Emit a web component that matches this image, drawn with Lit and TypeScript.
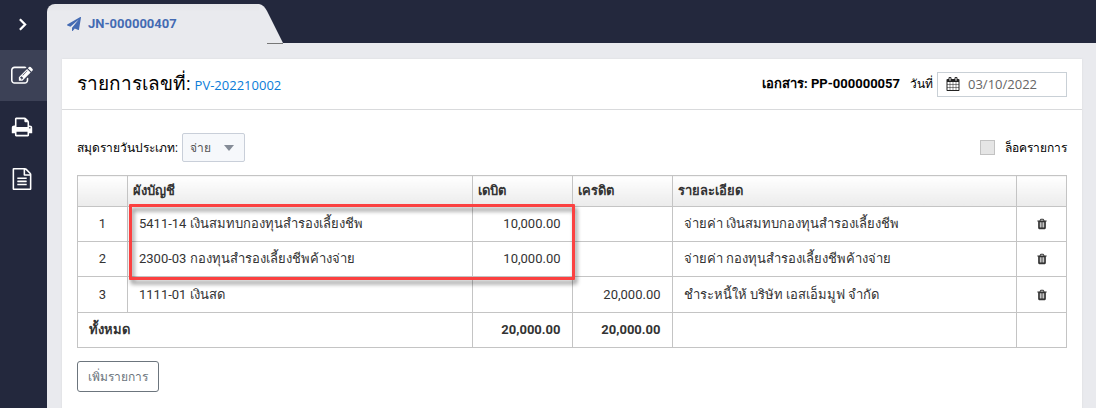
import { LitElement, html, css, svg } from "lit";
import { customElement, property, state } from "lit/decorators.js";

const ICONS: Record<string, string> = {
  edit: "M888 1184l116-116-152-152-116 116v56h96v96h56zm440-720q-16-16-33 1l-350 350q-17 17-1 33t33-1l350-350q17-17 1-33zm80 594v190q0 119-84.5 203.5t-203.5 84.5h-832q-119 0-203.5-84.5t-84.5-203.5v-832q0-119 84.5-203.5t203.5-84.5h832q63 0 117 25 15 7 18 23 3 17-9 29l-49 49q-14 14-32 8-23-6-45-6h-832q-66 0-113 47t-47 113v832q0 66 47 113t113 47h832q66 0 113-47t47-113v-126q0-13 9-22l64-64q15-15 35-7t20 29zm-96-738l288 288-672 672h-288v-288zm444 132l-92 92-288-288 92-92q28-28 68-28t68 28l152 152q28 28 28 68t-28 68z",
  print: "M448 1536h896v-256h-896v256zm0-640h896v-384h-160q-40 0-68-28t-28-68v-160h-640v640zm1152 64q0-26-19-45t-45-19-45 19-19 45 19 45 45 19 45-19 19-45zm128 0v416q0 13-9.5 22.5t-22.5 9.5h-224v160q0 40-28 68t-68 28h-960q-40 0-68-28t-28-68v-160h-224q-13 0-22.5-9.5t-9.5-22.5v-416q0-79 56.5-135.5t135.5-56.5h64v-544q0-40 28-68t68-28h672q40 0 88 20t76 48l152 152q28 28 48 76t20 88v256h64q79 0 135.5 56.5t56.5 135.5z",
  file: "M1596 380q28 28 48 76t20 88v1152q0 40-28 68t-68 28h-1344q-40 0-68-28t-28-68v-1600q0-40 28-68t68-28h896q40 0 88 20t76 48zm-444-244v376h376q-10-29-22-41l-313-313q-12-12-41-22zm384 1528v-1024h-416q-40 0-68-28t-28-68v-416h-768v1536h1280zm-1024-864q0-14 9-23t23-9h704q14 0 23 9t9 23v64q0 14-9 23t-23 9h-704q-14 0-23-9t-9-23v-64zm736 224q14 0 23 9t9 23v64q0 14-9 23t-23 9h-704q-14 0-23-9t-9-23v-64q0-14 9-23t23-9h704zm0 256q14 0 23 9t9 23v64q0 14-9 23t-23 9h-704q-14 0-23-9t-9-23v-64q0-14 9-23t23-9h704z",
  trash: "M704 1376v-704q0-14-9-23t-23-9h-64q-14 0-23 9t-9 23v704q0 14 9 23t23 9h64q14 0 23-9t9-23zm256 0v-704q0-14-9-23t-23-9h-64q-14 0-23 9t-9 23v704q0 14 9 23t23 9h64q14 0 23-9t9-23zm256 0v-704q0-14-9-23t-23-9h-64q-14 0-23 9t-9 23v704q0 14 9 23t23 9h64q14 0 23-9t9-23zm-544-992h448l-48-117q-7-9-17-11h-317q-10 2-17 11zm928 32v64q0 14-9 23t-23 9h-96v948q0 83-47 143.5t-113 60.5h-832q-66 0-113-58.5t-47-141.5v-952h-96q-14 0-23-9t-9-23v-64q0-14 9-23t23-9h309l70-167q15-37 54-63t79-26h320q40 0 79 26t54 63l70 167h309q14 0 23 9t9 23z",
  plane: "M1764 11q33 24 27 64l-256 1536q-5 29-32 45-14 8-31 8-11 0-24-5l-453-185-242 295q-18 23-49 23-13 0-22-4-19-7-30.5-23.5t-11.5-36.5v-349l864-1059-1069 925-395-162q-37-14-40-55-2-40 32-59l1664-960q15-9 32-9 20 0 36 11z",
  calendar: "M192 1664h288v-288h-288v288zm352 0h320v-288h-320v288zm-352-352h288v-320h-288v320zm352 0h320v-320h-320v320zm-352-384h288v-288h-288v288zm736 736h320v-288h-320v288zm-384-736h320v-288h-320v288zm768 736h288v-288h-288v288zm-384-352h320v-320h-320v320zm-352-864v-288q0-13-9.5-22.5t-22.5-9.5h-64q-13 0-22.5 9.5t-9.5 22.5v288q0 13 9.5 22.5t22.5 9.5h64q13 0 22.5-9.5t9.5-22.5zm736 864h288v-320h-288v320zm-384-384h320v-288h-320v288zm384 0h288v-288h-288v288zm32-480v-288q0-13-9.5-22.5t-22.5-9.5h-64q-13 0-22.5 9.5t-9.5 22.5v288q0 13 9.5 22.5t22.5 9.5h64q13 0 22.5-9.5t9.5-22.5zm384-64v1280q0 52-38 90t-90 38h-1408q-52 0-90-38t-38-90v-1280q0-52 38-90t90-38h128v-96q0-66 47-113t113-47h64q66 0 113 47t47 113v96h384v-96q0-66 47-113t113-47h64q66 0 113 47t47 113v96h128q52 0 90 38t38 90z",
};

@customElement("glyph-icon")
class GlyphIcon extends LitElement {
  @property() name = "edit";
  static styles = css`
    :host { display: inline-flex; width: 14px; height: 14px; }
    .glyph { width: 100%; height: 100%; fill: currentColor; overflow: visible; }
    .line { fill: none; stroke: currentColor; stroke-width: 240; }
  `;
  render() {
    return html`<svg class="glyph" viewBox="0 0 1792 1792" aria-hidden="true">
      ${this.name === "chevron"
        ? svg`<path class="line" d="M620 340L1170 896L620 1452" />`
        : svg`<path d=${ICONS[this.name]} />`}
    </svg>`;
  }
}

interface Entry {
  account: string;
  debit: string;
  credit: string;
  detail: string;
}

@customElement("app-root")
class AppRoot extends LitElement {
  @state() private entries: Entry[] = [
    { account: "5411-14 เงินสมทบกองทุนสำรองเลี้ยงชีพ", debit: "10,000.00", credit: "", detail: "จ่ายค่า เงินสมทบกองทุนสำรองเลี้ยงชีพ" },
    { account: "2300-03 กองทุนสำรองเลี้ยงชีพค้างจ่าย", debit: "10,000.00", credit: "", detail: "จ่ายค่า กองทุนสำรองเลี้ยงชีพค้างจ่าย" },
    { account: "1111-01 เงินสด", debit: "", credit: "20,000.00", detail: "ชำระหนี้ให้ บริษัท เอสเอ็มมูฟ จำกัด" },
  ];

  static styles = css`
    :host {
      display: grid;
      grid-template-columns: 47px 1fr;
      min-height: 100vh;
      background: #e9eaee;
      color: #000;
      font: 13px/20px Roboto, "Open Sans", sans-serif;
    }
    * { box-sizing: border-box; }
    button, input, select { font: inherit; color: inherit; margin: 0; }
    .side { background: #23283d; display: flex; flex-direction: column; }
    .side-btn {
      height: 52px; padding: 0 3px 0 0; border: 0; background: none; color: #fff;
      display: flex; align-items: center; justify-content: center;
    }
    .side-btn.first { height: 50px; padding-bottom: 2px; }
    .side-btn.active { background: #3c4156; height: 51px; }
    .side-btn glyph-icon { width: 22px; height: 22px; }
    .side-btn.first glyph-icon { width: 17px; height: 17px; }
    .side-btn.sheet { padding-bottom: 1px; }
    .topbar { height: 43px; background: #23283d; display: flex; align-items: flex-end; }
    .tab {
      height: 39px; width: 212px; padding: 0 20px; border-radius: 8px 0 0 0;
      background: linear-gradient(#e4e5e8, #e9eaee 8px); color: #446bb3;
      display: flex; align-items: center; gap: 7px; font-weight: 700; text-decoration: none;
    }
    .slant { width: 24px; height: 40px; margin-bottom: -1px; }
    .content { padding: 16px 14px 0 15px; display: flex; flex-direction: column; min-height: calc(100vh - 43px); }
    .card { background: #fff; flex: 1; box-shadow: 0 0 2px #d8d9de; }
    .head {
      height: 51px; padding: 0 15px; border-bottom: 1px solid #d9dadc;
      display: flex; align-items: center; justify-content: space-between;
    }
    .title { margin: 0; font-size: 19px; font-weight: 400; display: flex; align-items: baseline; gap: 4px; }
    .title a { font: 13px/20px "Open Sans", Roboto, sans-serif; color: #0a7cd8; text-decoration: none; }
    .doc { display: flex; align-items: center; }
    .doc b { margin-right: 10px; }
    label, .pick select, .add { font-size: 12px; }
    .doc label { margin-right: 4px; }
    .date { display: flex; align-items: center; width: 130px; height: 25px; padding-left: 8px; gap: 8px; border: 1px solid #c9d0d6; color: #222; }
    .date input { border: 0; padding: 0; width: 90px; background: none; outline: 0; color: #666; font-family: "Open Sans", Roboto, sans-serif; }
    .body { padding: 23px 15px; }
    .filter { display: flex; align-items: center; justify-content: space-between; height: 29px; }
    .group { display: flex; align-items: center; gap: 4px; }
    .pick { display: grid; align-items: center; }
    .pick > * { grid-area: 1 / 1; }
    .pick select { appearance: none; width: 63px; height: 29px; padding: 0 7px; border: 1px solid #c9cfd9; border-radius: 2px; background: #f6f8fb; color: #555; }
    .caret { justify-self: end; margin-right: 11px; width: 10px; height: 6px; fill: #858c97; pointer-events: none; }
    .lock { display: flex; align-items: center; gap: 10px; }
    .lock input { appearance: none; width: 15px; height: 15px; border: 1px solid #c2c2c2; background: #e5e5e5; }
    .sheet-wrap { position: relative; margin: 13px 0; }
    table { width: 100%; table-layout: fixed; border-collapse: collapse; color: #333; }
    th, td { border: 1px solid #c4c4c4; padding: 0 12px 0 11px; height: 35px; text-align: left; white-space: nowrap; }
    tbody tr:last-child td { height: 36px; }
    thead th { height: 31px; padding: 0 5px; background: linear-gradient(#fff, #ebebeb); }
    .narrow { width: 50px; }
    .money { width: 100px; }
    .mid { text-align: center; padding: 0; }
    .num { text-align: right; padding: 0 11px; }
    .del { border: 0; background: none; padding: 0; display: block; margin: 0 auto; height: 12px; line-height: 12px; }
    .del glyph-icon { width: 12px; height: 12px; }
    .mark {
      position: absolute; left: 52px; right: calc(50% - 3px); top: 29px; height: 76px;
      border: 3px solid #fb4141; border-radius: 1px; pointer-events: none;
      filter: drop-shadow(2px 4px 2px rgba(0, 0, 0, 0.45));
    }
    .add { height: 31px; padding: 0 10px; border: 1px solid #6c757d; border-radius: 3px; background: #fff; color: #6c757d; }
  `;

  render() {
    return html`
      <nav class="side">
        <button class="side-btn first" aria-label="ขยายเมนู"><glyph-icon name="chevron"></glyph-icon></button>
        <button class="side-btn active" aria-label="แก้ไข"><glyph-icon name="edit"></glyph-icon></button>
        <button class="side-btn" aria-label="พิมพ์"><glyph-icon name="print"></glyph-icon></button>
        <button class="side-btn sheet" aria-label="เอกสาร"><glyph-icon name="file"></glyph-icon></button>
      </nav>
      <div>
        <header class="topbar">
          <a class="tab" href="#"><glyph-icon name="plane"></glyph-icon>JN-000000407</a>
          <svg class="slant" viewBox="0 0 24 40" aria-hidden="true">
            <path fill="#e9eaee" d="M0 0Q5 1 8 7L24 39V40H0Z" />
            <path fill="#777" d="M8 39H24V40H8Z" />
          </svg>
        </header>
        <main class="content">
          <section class="card">
            <div class="head">
              <h1 class="title">รายการเลขที่: <a href="#">PV-202210002</a></h1>
              <div class="doc">
                <b>เอกสาร: PP-000000057</b>
                <label for="date">วันที่</label>
                <span class="date"><glyph-icon name="calendar"></glyph-icon><input id="date" type="text" value="03/10/2022" /></span>
              </div>
            </div>
            <div class="body">
              <div class="filter">
                <div class="group">
                  <label for="book">สมุดรายวันประเภท:</label>
                  <span class="pick">
                    <select id="book"><option>จ่าย</option></select>
                    <svg class="caret" viewBox="0 0 10 6" aria-hidden="true"><path d="M0 0H10L5 6Z" /></svg>
                  </span>
                </div>
                <label class="lock"><input type="checkbox" />ล็อครายการ</label>
              </div>
              <div class="sheet-wrap">
                <table>
                  <thead>
                    <tr>
                      <th class="narrow"></th>
                      <th>ผังบัญชี</th>
                      <th class="money">เดบิต</th>
                      <th class="money">เครดิต</th>
                      <th>รายละเอียด</th>
                      <th class="narrow"></th>
                    </tr>
                  </thead>
                  <tbody>
                    ${this.entries.map(
                      (e, i) => html`<tr>
                        <td class="mid">${i + 1}</td>
                        <td>${e.account}</td>
                        <td class="num">${e.debit}</td>
                        <td class="num">${e.credit}</td>
                        <td>${e.detail}</td>
                        <td class="mid"><button class="del" aria-label="ลบ"><glyph-icon name="trash"></glyph-icon></button></td>
                      </tr>`
                    )}
                  </tbody>
                  <tfoot>
                    <tr>
                      <th colspan="2">ทั้งหมด</th>
                      <th class="num">20,000.00</th>
                      <th class="num">20,000.00</th>
                      <th></th>
                      <th></th>
                    </tr>
                  </tfoot>
                </table>
                <div class="mark"></div>
              </div>
              <button class="add">เพิ่มรายการ</button>
            </div>
          </section>
        </main>
      </div>
    `;
  }
}
